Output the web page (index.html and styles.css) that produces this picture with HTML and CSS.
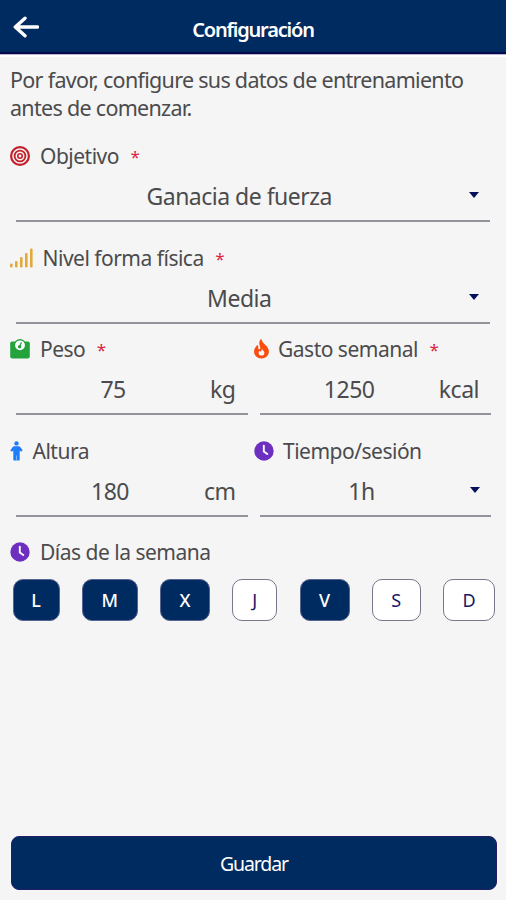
FILE: index.html
```html
<!DOCTYPE html>
<html lang="es">
<head>
<meta charset="utf-8">
<title>Configuración</title>
<link rel="stylesheet" href="styles.css">
</head>
<body>
<header class="bar">
  <svg class="back" viewBox="0 0 26 22" width="26" height="22"><path d="M12 2.2 2.3 11 12 19.8M3 11h21.5" fill="none" stroke="#fff" stroke-width="3.4" stroke-linecap="round" stroke-linejoin="round"/></svg>
  <h1 class="title">Configuración</h1>
</header>
<main class="content">
  <p class="intro">Por favor, configure sus datos de entrenamiento<br>antes de comenzar.</p>

  <section class="field">
    <div class="label">
      <svg width="20" height="20" viewBox="0 0 20 20" fill="none" stroke="#c4202c"><circle cx="10" cy="10" r="8.9" stroke-width="2.2"/><circle cx="10" cy="10" r="5.4" stroke-width="1.8"/><circle cx="10" cy="10" r="2.2" stroke-width="1.6"/></svg>
      <span class="name">Objetivo</span><span class="req">*</span>
    </div>
    <div class="control"><span class="value selected">Ganacia de fuerza</span><i class="caret"></i></div>
  </section>

  <section class="field tight">
    <div class="label">
      <svg width="23" height="20" viewBox="0 0 23 20" fill="#e2a93c"><rect x="0" y="15.5" width="2.6" height="4" rx="1"/><rect x="5" y="13" width="2.6" height="6.5" rx="1"/><rect x="10" y="9" width="2.6" height="10.5" rx="1"/><rect x="15" y="5" width="2.6" height="14.5" rx="1"/><rect x="20" y="0.5" width="2.6" height="19" rx="1"/></svg>
      <span class="name near">Nivel forma física</span><span class="req">*</span>
    </div>
    <div class="control"><span class="value selected">Media</span><i class="caret"></i></div>
  </section>

  <div class="pair">
    <section class="field">
      <div class="label">
        <svg width="20" height="20" viewBox="0 0 20 20"><path d="M2 2.4h16a1.8 1.8 0 0 1 1.8 1.8v13.4a1.8 1.8 0 0 1-1.8 1.8H2a1.8 1.8 0 0 1-1.8-1.8V4.2A1.8 1.8 0 0 1 2 2.4z" fill="#22a33c"/><circle cx="10" cy="6" r="6" fill="#22a33c"/><circle cx="10" cy="6.3" r="4.9" fill="#fff"/><path d="M9.6 7.6 11.3 3.8" stroke="#22a33c" stroke-width="1.3" stroke-linecap="round"/><circle cx="9.6" cy="7.7" r="1.7" fill="#22a33c"/></svg>
        <span class="name">Peso</span><span class="req">*</span>
      </div>
      <div class="control"><span class="value">75</span><span class="unit">kg</span></div>
    </section>
    <section class="field">
      <div class="label">
        <svg width="15" height="20" viewBox="0 0 15 20"><path d="M7.6.6C8.3 5 14.9 6.8 14.9 12.6 14.9 16.7 11.6 19.6 7.5 19.6S.1 16.7.1 12.6C.1 10 1.4 8 2.9 6.5c.6-.5 1.3-.2 1.3.6v2.2c0 1.400 2 1.500 2.100 0C6.500 6.500 3.800 4.800 6.400.6c.3-.5 1.100-.5 1.200 0z" fill="#fb4c0d"/><path d="M7.800 9.400c.3 1.600 2.600 2.200 2.600 4.300a2.900 2.900 0 0 1-5.800 0c0-.7.200-1.200.5-1.700 1.200 1 3 .2 2.700-2.600z" fill="#f5f5f5"/></svg>
        <span class="name near">Gasto semanal</span><span class="req">*</span>
      </div>
      <div class="control"><span class="value">1250</span><span class="unit">kcal</span></div>
    </section>
    <section class="field">
      <div class="label">
        <svg width="13" height="20" viewBox="0 0 13 20" fill="#1f7dfa"><circle cx="6.5" cy="2.400" r="2.200"/><path d="M4.200 5.200h4.600c.5 0 .9.200 1.200.5l2.700 3.500-1.500 1.500L9.700 9.500v9.300a.8.800 0 0 1-.8.800H4.100a.8.800 0 0 1-.8-.8V9.500L1.800 10.700.3 9.200 3 5.700c.3-.3.700-.5 1.200-.5z"/><path d="M6.500 14.500v5.100" stroke="#8fbffb" stroke-width=".8"/></svg>
        <span class="name near">Altura</span>
      </div>
      <div class="control"><span class="value">180</span><span class="unit">cm</span></div>
    </section>
    <section class="field">
      <div class="label">
        <svg width="20" height="20" viewBox="0 0 20 20"><circle cx="10" cy="10" r="9.7" fill="#6c2fbf"/><path d="M9.8 4.6v5.800l3.500 2.500" fill="none" stroke="#fff" stroke-width="1.900" stroke-linecap="round"/></svg>
        <span class="name near">Tiempo/sesión</span>
      </div>
      <div class="control"><span class="value selected">1h</span><i class="caret"></i></div>
    </section>
  </div>

  <div class="label">
    <svg width="20" height="20" viewBox="0 0 20 20"><circle cx="10" cy="10" r="9.7" fill="#6c2fbf"/><path d="M9.8 4.6v5.800l3.500 2.500" fill="none" stroke="#fff" stroke-width="1.900" stroke-linecap="round"/></svg>
    <span class="name">Días de la semana</span>
  </div>
  <div class="days">
    <button class="day on d-l">L</button>
    <button class="day on d-m">M</button>
    <button class="day on d-x">X</button>
    <button class="day d-j">J</button>
    <button class="day on d-v">V</button>
    <button class="day d-s">S</button>
    <button class="day d-d">D</button>
  </div>
  <button class="save">Guardar</button>
</main>
</body>
</html>
```
FILE: styles.css
```css
* { box-sizing: border-box; }
body {
  margin: 0;
  height: 900px;
  display: flex;
  flex-direction: column;
  background: #f5f5f5;
  color: #4b4b4d;
  font-family: "Noto Sans", "Open Sans", sans-serif;
  font-size: 21px;
  letter-spacing: -0.5px;
  overflow: hidden;
}
.bar {
  display: grid;
  grid-template-columns: 40px 1fr 40px;
  align-items: center;
  height: 54px;
  background: #002b60;
  border-bottom: 2px solid #05094f;
  box-shadow: 0 1px 0 #b9b5cf, 0 3px 0 #fff;
}
.back { margin: 2px 0 0 13px; }
.title {
  margin: 7px 0 0;
  color: #fff;
  text-align: center;
  font-size: 20px;
  line-height: 28px;
  font-weight: 600;
  letter-spacing: -1.2px;
}
.content {
  flex: 1;
  display: flex;
  flex-direction: column;
  padding: 12px 10px 10px;
}
.intro {
  margin: 0 0 20px;
  font-size: 21.5px;
  line-height: 28px;
  white-space: nowrap;
  letter-spacing: -0.7px;
}
.field { height: 101.5px; }
.field.tight { height: 91.5px; }
.label { display: flex; align-items: center; height: 28px; white-space: nowrap; line-height: 28px; }
.label svg { flex: none; }
.name { margin-left: 10px; }
.name.near { margin-left: 9.5px; }
.req { margin: 2px 0 0 11.5px; color: #dc2440; font-size: 17px; }
.control {
  display: flex;
  align-items: center;
  height: 52px;
  margin: 0 6px;
  padding-top: 2px;
  border-bottom: 2px solid #93949b;
  font-size: 23px;
}
.value { flex: 1; text-align: center; }
.value.selected { padding-right: 6px; }
.unit { margin-right: 12px; }
.caret {
  width: 0;
  height: 0;
  margin: 0 11.5px 2px 0;
  border: 5.5px solid transparent;
  border-top: 6px solid #04115a;
  border-bottom: 0;
}
.pair { display: grid; grid-template-columns: 243.5px 243.5px; }
.days { display: flex; justify-content: space-between; margin: 13px 1px 0 2.5px; }
.day {
  height: 42px;
  padding: 0;
  border: 1.5px solid #77788c;
  border-radius: 10px;
  background: #fff;
  color: #1a1768;
  font: 18px "Noto Sans", sans-serif;
}
.day.on { background: #002b60; color: #fff; border-color: #59638f; font-weight: 500; }
.d-l { width: 47px; }
.d-m { width: 56px; }
.d-x { width: 50px; }
.d-j { width: 45px; }
.d-v { width: 50px; }
.d-s { width: 49px; }
.d-d { width: 52px; }
.save {
  height: 54px;
  margin: auto -1px 0 1px;
  border: 1.5px solid #231d68;
  border-radius: 8px;
  background: #002b60;
  color: #fff;
  font: 19.5px "Noto Sans", sans-serif;
  letter-spacing: -1.1px;
}
```
